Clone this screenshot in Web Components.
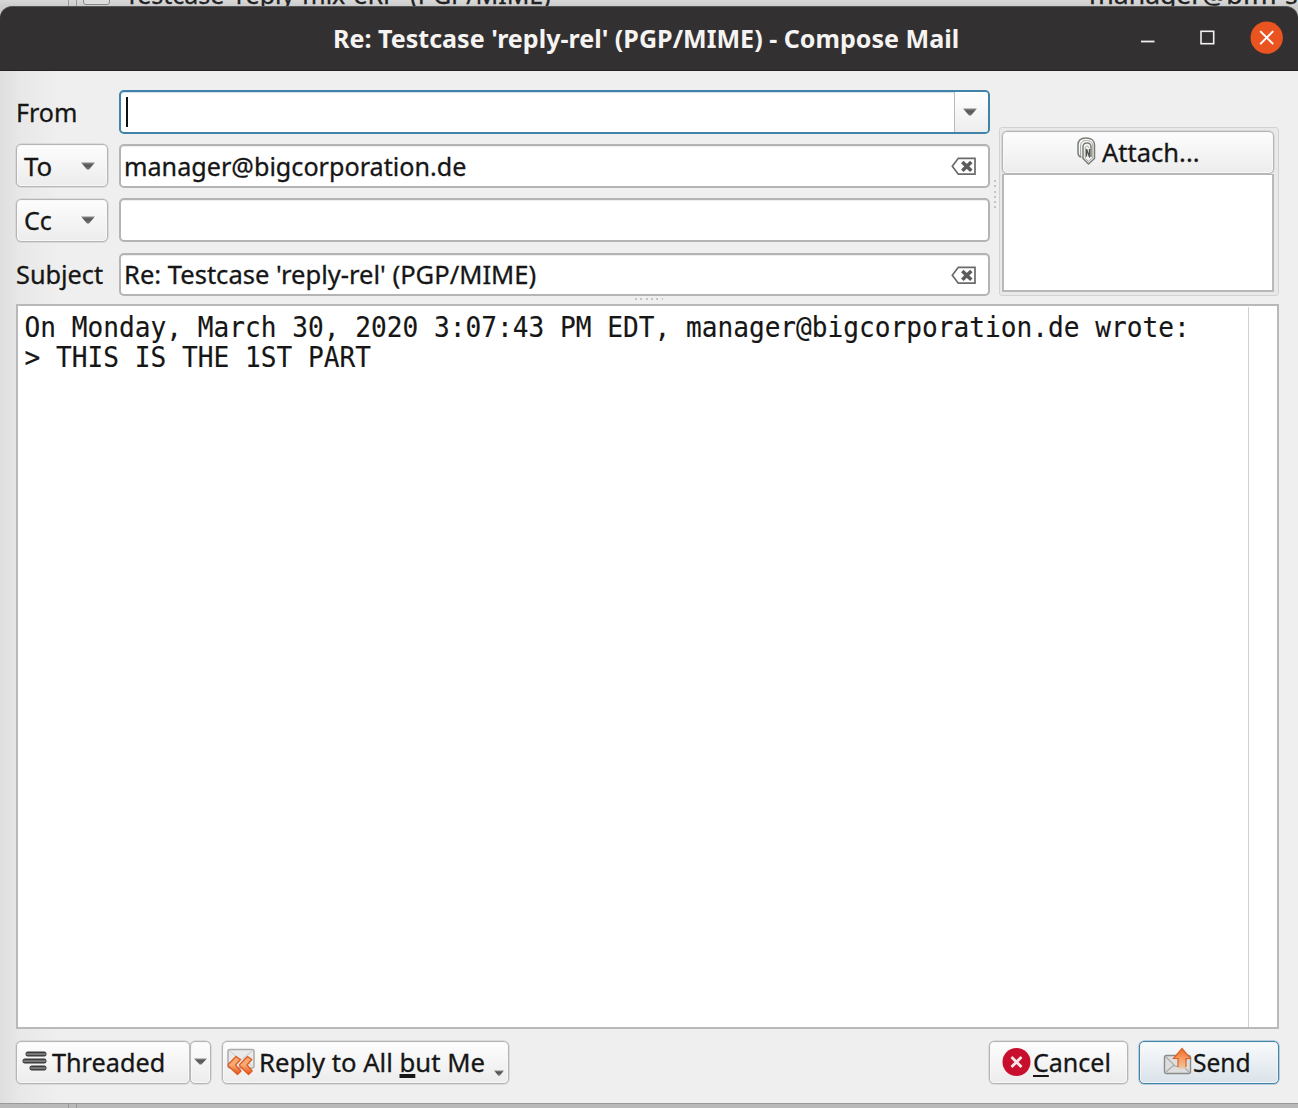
<!DOCTYPE html>
<html lang="en">
<head>
<meta charset="utf-8">
<title>Compose Mail</title>
<style>
html, body { margin: 0; height: 100%; overflow: hidden; }
body { font: 25px "Noto Sans", sans-serif; color: #161616; background: #d2d2d2; -webkit-text-stroke: .3px; }
</style>
</head>
<body>
<mail-desktop></mail-desktop>
<script>
const define = (name, html, setup) => {
  const t = document.createElement('template');
  t.innerHTML = html;
  customElements.define(name, class extends HTMLElement {
    constructor() {
      super();
      this.attachShadow({ mode: 'open' }).append(t.content.cloneNode(true));
    }
    connectedCallback() { if (setup) setup(this, this.shadowRoot); }
  });
};

/* A run of text set to an exact width. */
define('fit-text', `
<style>
:host { display: block; flex: none; line-height: 34px; white-space: nowrap; }
span { display: inline-block; transform-origin: 0 50%; }
::slotted(u) { text-decoration-thickness: var(--ul, 2px); text-underline-offset: var(--uo, 3px); text-decoration-skip-ink: none; }
</style><span><slot></slot></span>`, (host, root) => {
  const w = +host.getAttribute('w');
  const s = root.querySelector('span');
  host.style.width = w + 'px';
  s.style.transform = 'scaleX(' + w / s.offsetWidth + ')';
});

define('down-arrow', `
<style>:host { display: block; flex: none; width: 14px; height: 8px; } svg { display: block; width: 100%; height: 100%; }</style>
<svg viewBox="0 0 14 8" preserveAspectRatio="none"><defs><linearGradient id="g" x2="0" y2="1"><stop stop-color="#8a8a8a"/><stop offset=".4" stop-color="#555"/><stop offset="1" stop-color="#777"/></linearGradient></defs><path d="M0 .5H14L8 7.5H6Z" fill="url(#g)"/></svg>`);

define('clear-icon', `
<style>:host { display: block; flex: none; width: 26px; height: 19px; margin-top: 2px; } svg { display: block; }</style>
<svg width="26" height="19" viewBox="0 0 26 19"><path d="M7.3 1.3H24V17.2H7.3L1.3 9.3Z" fill="#fff" stroke="#6a6a6a" stroke-width="1.7"/><path d="M11.3 5L20.3 13.8M20.3 5L11.3 13.8" stroke="#5c5c5c" stroke-width="3.6"/></svg>`);

define('push-button', `
<style>
:host { display: flex; box-sizing: border-box; flex: none; align-items: center; height: 43px; border: 1.500px solid #b5b5b5; border-radius: 5px; background: linear-gradient(#fdfdfd, #ececec); box-shadow: inset 0 0 0 1px #f8f8f8, 0 0 0 .5px #c8c8c8; }
:host([default]) { border-color: #4585ab; background: linear-gradient(#f9fbfc, #dae2e9); box-shadow: inset 0 0 0 1px #eef4f8, 0 0 0 .5px #7fa9c4; }
</style><slot></slot>`);

define('text-field', `
<style>
:host { display: flex; box-sizing: border-box; align-items: center; height: 43.5px; width: 871px; border: 2px solid #b4b4b4; border-radius: 5px; background: #fff; padding: 0 11px 0 3px; justify-content: space-between; box-shadow: inset 0 1px #eee; }
:host([focused]) { border-color: #3f83a9; padding: 0; box-shadow: inset 0 1px #cfe0eb; }
.caret { width: 2px; height: 30px; margin: 0 auto 0 4.5px; background: #111; }
.drop { box-sizing: border-box; display: flex; align-items: center; justify-content: center; width: 34px; height: 100%; padding-right: 3px; border-left: 1.5px solid #b9b9b9; border-radius: 0 3px 3px 0; background: linear-gradient(#fff, #ededed); }
:host(:not([focused])) :is(.caret, .drop) { display: none; }
</style><slot></slot><div class="caret"></div><div class="drop"><down-arrow></down-arrow></div>`);

define('title-bar', `
<style>
:host { display: grid; grid-template-columns: 1fr 158px; box-sizing: border-box; flex: none; height: 65px; border-bottom: 1px solid #222; border-top: 1px solid #555; border-radius: 12px 12px 0 0; background: #333031; color: #f6f4f2; font-weight: bold; align-items: center; -webkit-text-stroke: 0; }
.text { padding: 0 0 2px 333px; }
svg { display: block; }
</style>
<div class="text"><slot></slot></div>
<svg width="158" height="63" viewBox="1140 7 158 63">
<path d="M1141 41.5H1154.500" stroke="#eee" stroke-width="1.8"/>
<rect x="1201" y="31.300" width="12.700" height="12.400" fill="none" stroke="#f1f1f1" stroke-width="1.600"/>
<circle cx="1266.700" cy="37.600" r="16.200" fill="#e95420"/>
<path d="M1260.200 31.100L1273.200 44.100M1273.200 31.100L1260.200 44.100" stroke="#fff" stroke-width="2"/></svg>`);

define('grip-dots', `
<style>
:host { display: block; width: 28px; height: 2px; background: repeating-linear-gradient(90deg, #c4c4c4 0 2px, transparent 2px 5.300px); }
:host([vertical]) { width: 2px; height: 28px; background: repeating-linear-gradient(#c4c4c4 0 2px, transparent 2px 5.300px); }
</style>`);

define('mail-headers', `
<style>
:host { display: grid; flex: none; grid-template-columns: 92px 871px; grid-auto-rows: 43.500px; gap: 10.700px 11px; align-items: center; }
push-button { width: 92px; padding: 0 12px 0 7px; justify-content: space-between; }
</style>
<fit-text w="61">From</fit-text><text-field focused></text-field>
<push-button><fit-text w="28">To</fit-text><down-arrow></down-arrow></push-button>
<text-field><fit-text w="342">manager@bigcorporation.de</fit-text><clear-icon></clear-icon></text-field>
<push-button><fit-text w="28">Cc</fit-text><down-arrow></down-arrow></push-button>
<text-field></text-field>
<fit-text w="87">Subject</fit-text>
<text-field><fit-text w="412">Re: Testcase 'reply-rel' (PGP/MIME)</fit-text><clear-icon></clear-icon></text-field>`);

define('attachment-panel', `
<style>
:host { display: flex; flex-direction: column; box-sizing: border-box; width: 280px; height: 169px; margin-top: 37px; padding: 3px 4px 3px 2px; border: 1.500px solid #d2d2d2; border-radius: 3px; background: #e9e9e9; }
push-button { height: 43px; justify-content: center; gap: 6px; }
fit-text { margin-bottom: 2px; }
.list { flex: 1; border: 2px solid #b8b8b8; border-top-width: 1px; background: #fff; }
svg { flex: none; margin-bottom: 3px; }
</style>
<push-button>
<svg width="19" height="28" viewBox="0 0 19 28" fill="none" stroke-linejoin="round"><path d="M4.500 20C1.500 20 1 18 1 15V8C1 3.500 4 1 9 1S17.500 3.500 17.500 8V21.500L11.500 27L6 21.500V10C6 7 7.500 6 10 6S14 7 14 10V20" stroke="#7a7e77" stroke-width="1.500"/><path d="M3.600 19V9C3.600 5 6 3.500 9.300 3.500S15.800 5 15.800 9V20.500L11.500 24.500L8.300 21.500V11C8.300 8.500 11.800 8.500 11.800 11" stroke="#a3a79f" stroke-width="1"/><path d="M9.500 12V19.500M9.500 12L12.500 20V12" stroke="#4f544d" stroke-width="1.300"/></svg>
<fit-text w="98">Attach...</fit-text></push-button>
<div class="list"></div>`);

define('message-body', `
<style>
:host { display: flex; box-sizing: border-box; flex: none; height: 725px; border: 2px solid #b9b9b9; background: #fff; font: 26.170px/29.500px "DejaVu Sans Mono", monospace; -webkit-text-stroke: .15px; }
.text { flex: 1; padding: 5.500px 0 0 6.500px; white-space: pre; transform: scaleY(1.060); transform-origin: 0 0; height: 600px; }
.track { box-sizing: border-box; width: 29px; margin-top: 1px; border-left: 1.500px solid #d0d0d0; }
</style><div class="text"><slot></slot></div><div class="track"></div>`);

define('action-bar', `
<style>
:host { display: flex; flex: none; }
fit-text { margin-bottom: 2px; }
.threaded { width: 174px; padding-left: 5px; gap: 4px; }
.threaded svg { margin-bottom: 3px; }
.more { width: 21px; justify-content: center; margin-right: 11px; }
.more down-arrow { width: 13px; height: 7px; margin-bottom: 3px; }
.reply { width: 287px; padding-left: 4px; gap: 4px; --ul: 3.500px; --uo: 2px; }
.reply svg { margin-bottom: 1px; }
.reply down-arrow { width: 10px; height: 6px; margin: 21px 0 0 5px; }
.cancel { width: 139px; margin-left: auto; padding-left: 12px; gap: 2px; }
.send { width: 140px; margin-left: 11px; padding-left: 23px; gap: 1px; }
.send svg { margin-bottom: 2px; }
svg { flex: none; }
</style>
<push-button class="threaded"><svg width="26" height="22" viewBox="0 0 26 22"><defs><linearGradient id="bar" x2="0" y2="1"><stop stop-color="#333"/><stop offset=".55" stop-color="#8b8d8a"/><stop offset="1" stop-color="#333"/></linearGradient></defs><g fill="url(#bar)" stroke="#353535"><rect x="4" y="2" width="20" height="4" rx="1.500"/><rect x="1" y="9" width="23" height="4" rx="1.500"/><rect x="8" y="16" width="16" height="4" rx="1.500"/></g></svg><fit-text w="113">Threaded</fit-text></push-button>
<push-button class="more"><down-arrow></down-arrow></push-button>
<push-button class="reply"><svg width="28" height="28" viewBox="0 0 28 28"><defs><linearGradient id="or" x2="0" y2="1"><stop stop-color="#f8a365"/><stop offset=".45" stop-color="#f7ad74"/><stop offset="1" stop-color="#e64f18"/></linearGradient></defs><rect x="1" y="1.500" width="26" height="18.500" rx="2" fill="#e9e9e9" stroke="#aaa" stroke-width="1.500"/><path d="M3 3L14 12L25 3M3 18L11 10M25 18L17 10" fill="none" stroke="#c8c8c8"/><path d="M9 8.500L13.500 11.500L8.500 17L14 23L10.500 26.500L1.200 18V16.500ZM20.500 8.500L24.800 11.500L20 17L25.200 23L21.500 26.500L12.700 18V16.500Z" fill="url(#or)" stroke="#df5c24" stroke-width="1.300" stroke-linejoin="round"/></svg><fit-text w="226">Reply to All <u>b</u>ut Me</fit-text><down-arrow></down-arrow></push-button>
<push-button class="cancel"><svg width="29" height="29" viewBox="0 0 29 29"><circle cx="14.500" cy="14" r="14" fill="#c8102e"/><path d="M9.500 9L19.500 19M19.500 9L9.500 19" stroke="#f6e8ea" stroke-width="2.800"/></svg><fit-text w="78"><u>C</u>ancel</fit-text></push-button>
<push-button class="send" default><svg width="29" height="29" viewBox="0 0 29 29"><defs><linearGradient id="up" x2="0" y2="1"><stop stop-color="#ef6b25"/><stop offset=".5" stop-color="#f79b63"/><stop offset="1" stop-color="#eac8a0"/></linearGradient></defs><rect x="1.500" y="8.500" width="26" height="18" rx="2" fill="#dedede" stroke="#8b8b8b" stroke-width="1.400"/><path d="M3 10L12 19L16 20L26 10M3 25L11 18M26 25L19 18" fill="none" stroke="#aaa" stroke-width="1.200"/><path d="M19 1.500L27.500 11.500H23V21.500H15V11.500H10.500Z" fill="url(#up)"/><path d="M15 20V11.500H10.500L19 1.500L27.500 11.500H23V20" fill="none" stroke="#d96328" stroke-width="1.200"/></svg><fit-text w="58">Send</fit-text></push-button>`);

define('compose-window', `
<style>
:host { display: flex; flex-direction: column; flex: none; height: 1097px; border-bottom: 1.500px solid #999; }
main { flex: 1; display: flex; flex-direction: column; padding: 19px 19px 0 16px; background: linear-gradient(90deg, #dedede, #e8e8e8 20px, #efefef 60px); }
.top { display: flex; height: 207px; }
.vgrip { display: flex; align-items: center; justify-content: center; width: 9px; height: 207px; }
.hgrip { display: flex; justify-content: center; height: 7px; box-sizing: border-box; padding: 1px 0 0 2px; }
action-bar { margin-top: 12px; }
</style>
<title-bar><fit-text w="626">Re: Testcase 'reply-rel' (PGP/MIME) - Compose Mail</fit-text></title-bar>
<main>
<div class="top"><mail-headers></mail-headers><div class="vgrip"><grip-dots vertical></grip-dots></div><attachment-panel></attachment-panel></div>
<div class="hgrip"><grip-dots></grip-dots></div>
<message-body>On Monday, March 30, 2020 3:07:43 PM EDT, manager@bigcorporation.de wrote:
&gt; THIS IS THE 1ST PART</message-body>
<action-bar></action-bar>
</main>`);

define('mail-desktop', `
<style>
:host { display: flex; flex-direction: column; height: 1108px; background: linear-gradient(#d8d8d8, #ccc 6px, #ccc 50px, #b9b9b9 1103px); }
.back { display: flex; align-items: flex-end; height: 6px; flex: none; overflow: hidden; color: #222; }
.back fit-text { margin-bottom: -5px; }
.split { flex: none; box-sizing: border-box; width: 9px; height: 6px; margin-left: 68px; border: solid #999; border-width: 0 1.500px; }
.box { flex: none; box-sizing: border-box; width: 27px; height: 18px; margin: 0 15px 1px 6px; border: 1.500px solid #888; border-radius: 3px; background: #ddd; }
.from { margin-left: 538px; }
</style>
<div class="back"><div class="split"></div><div class="box"></div><fit-text w="426">Testcase 'reply-mix-eRP' (PGP/MIME)</fit-text><fit-text class="from" w="222">manager@bfm-sc</fit-text></div>
<compose-window></compose-window>
<div class="split"></div>`);
</script>
</body>
</html>
